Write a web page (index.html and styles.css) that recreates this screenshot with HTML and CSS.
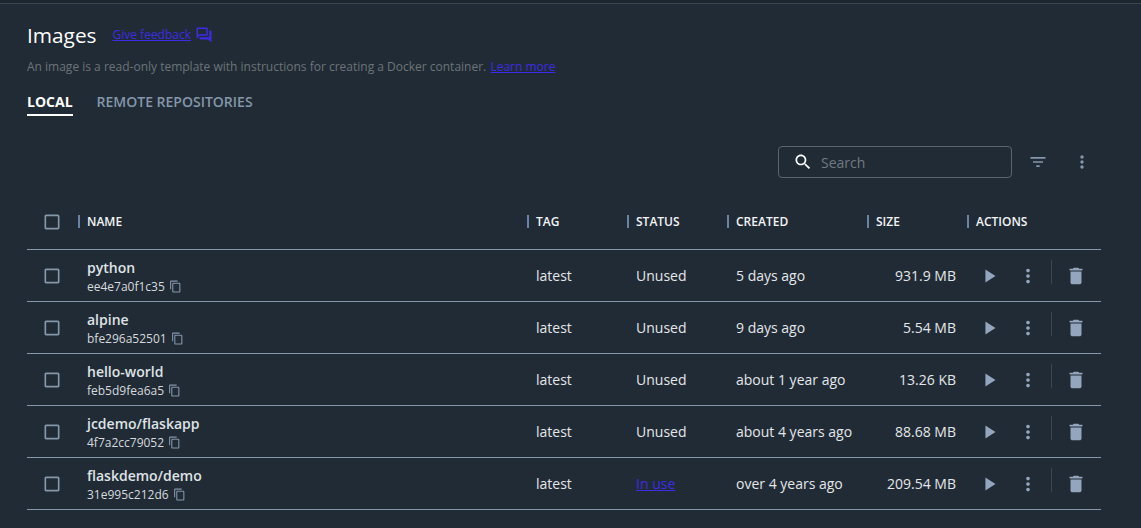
FILE: index.html
```html
<!DOCTYPE html>
<html lang="en">
<head>
  <meta charset="UTF-8">
  <title>Images</title>
  <link rel="stylesheet" href="styles.css">
</head>
<body>
  <svg class="defs" width="0" height="0">
    <symbol id="i-box" viewBox="0 0 24 24"><path d="M19 5v14H5V5h14m0-2H5c-1.100 0-2 .9-2 2v14c0 1.100.9 2 2 2h14c1.100 0 2-.9 2-2V5c0-1.100-.9-2-2-2z"/></symbol>
    <symbol id="i-copy" viewBox="0 0 24 24"><path d="M16 1H4c-1.100 0-2 .9-2 2v14h2V3h12V1zm3 4H8c-1.100 0-2 .9-2 2v14c0 1.100.9 2 2 2h11c1.100 0 2-.9 2-2V7c0-1.100-.9-2-2-2zm0 16H8V7h11v14z"/></symbol>
    <symbol id="i-play" viewBox="0 0 24 24"><path d="M7 5v14l11-7z"/></symbol>
    <symbol id="i-dots" viewBox="0 0 24 24"><path d="M12 8c1.100 0 2-.9 2-2s-.9-2-2-2-2 .9-2 2 .9 2 2 2zm0 2c-1.100 0-2 .9-2 2s.9 2 2 2 2-.9 2-2-.9-2-2-2zm0 6c-1.100 0-2 .9-2 2s.9 2 2 2 2-.9 2-2-.9-2-2-2z"/></symbol>
    <symbol id="i-trash" viewBox="0 0 24 24"><path d="M6 19c0 1.100.9 2 2 2h8c1.100 0 2-.9 2-2V7H6v12zM19 4h-3.500l-1-1h-5l-1 1H5v2h14V4z"/></symbol>
  </svg>

  <div class="topline"></div>

  <header class="head">
    <div class="title-row">
      <h1>Images</h1>
      <a class="feedback" href="#">Give feedback</a>
      <svg class="feedback-icon" viewBox="0 0 24 24"><path d="M15 4v7H5.170L4 12.170V4h11m1-2H3c-.55 0-1 .45-1 1v14l4-4h10c.55 0 1-.45 1-1V3c0-.55-.45-1-1-1zm5 4h-2v9H6v2c0 .55.45 1 1 1h11l4 4V7c0-.55-.45-1-1-1z"/></svg>
    </div>
    <p class="desc">An image is a read-only template with instructions for creating a Docker container. <a href="#">Learn more</a></p>
    <nav class="tabs">
      <span class="tab active">LOCAL</span>
      <span class="tab">REMOTE REPOSITORIES</span>
    </nav>
  </header>

  <div class="toolbar">
    <div class="search">
      <svg class="search-icon" viewBox="0 0 24 24"><path d="M15.500 14h-.79l-.28-.27C15.410 12.590 16 11.110 16 9.500 16 5.910 13.090 3 9.500 3S3 5.910 3 9.500 5.910 16 9.500 16c1.610 0 3.090-.59 4.230-1.570l.27.28v.79l5 4.990L20.490 19l-4.990-5zm-6 0C7.010 14 5 11.990 5 9.500S7.010 5 9.500 5 14 7.010 14 9.500 11.990 14 9.500 14z"/></svg>
      <span>Search</span>
    </div>
    <svg class="tool-icon filter" viewBox="0 0 24 24"><path d="M10 18h4v-2h-4v2zM3 6v2h18V6H3zm3 7h12v-2H6v2z"/></svg>
    <svg class="tool-icon dots"><use href="#i-dots"/></svg>
  </div>

  <div class="table">
    <div class="row header">
      <div class="cell check"><svg class="box"><use href="#i-box"/></svg></div>
      <div class="cell th">NAME</div>
      <div class="cell th">TAG</div>
      <div class="cell th">STATUS</div>
      <div class="cell th">CREATED</div>
      <div class="cell th">SIZE</div>
      <div class="cell th">ACTIONS</div>
    </div>

    <div class="row">
      <div class="cell check"><svg class="box"><use href="#i-box"/></svg></div>
      <div class="cell name"><strong>python</strong><small>ee4e7a0f1c35 <svg class="copy"><use href="#i-copy"/></svg></small></div>
      <div class="cell">latest</div>
      <div class="cell">Unused</div>
      <div class="cell">5 days ago</div>
      <div class="cell size">931.9 MB</div>
      <div class="cell actions"><svg class="play"><use href="#i-play"/></svg><svg class="more"><use href="#i-dots"/></svg><i class="divider"></i><svg class="trash"><use href="#i-trash"/></svg></div>
    </div>

    <div class="row">
      <div class="cell check"><svg class="box"><use href="#i-box"/></svg></div>
      <div class="cell name"><strong>alpine</strong><small>bfe296a52501 <svg class="copy"><use href="#i-copy"/></svg></small></div>
      <div class="cell">latest</div>
      <div class="cell">Unused</div>
      <div class="cell">9 days ago</div>
      <div class="cell size">5.54 MB</div>
      <div class="cell actions"><svg class="play"><use href="#i-play"/></svg><svg class="more"><use href="#i-dots"/></svg><i class="divider"></i><svg class="trash"><use href="#i-trash"/></svg></div>
    </div>

    <div class="row">
      <div class="cell check"><svg class="box"><use href="#i-box"/></svg></div>
      <div class="cell name"><strong>hello-world</strong><small>feb5d9fea6a5 <svg class="copy"><use href="#i-copy"/></svg></small></div>
      <div class="cell">latest</div>
      <div class="cell">Unused</div>
      <div class="cell">about 1 year ago</div>
      <div class="cell size">13.26 KB</div>
      <div class="cell actions"><svg class="play"><use href="#i-play"/></svg><svg class="more"><use href="#i-dots"/></svg><i class="divider"></i><svg class="trash"><use href="#i-trash"/></svg></div>
    </div>

    <div class="row">
      <div class="cell check"><svg class="box"><use href="#i-box"/></svg></div>
      <div class="cell name"><strong>jcdemo/flaskapp</strong><small>4f7a2cc79052 <svg class="copy"><use href="#i-copy"/></svg></small></div>
      <div class="cell">latest</div>
      <div class="cell">Unused</div>
      <div class="cell">about 4 years ago</div>
      <div class="cell size">88.68 MB</div>
      <div class="cell actions"><svg class="play"><use href="#i-play"/></svg><svg class="more"><use href="#i-dots"/></svg><i class="divider"></i><svg class="trash"><use href="#i-trash"/></svg></div>
    </div>

    <div class="row">
      <div class="cell check"><svg class="box"><use href="#i-box"/></svg></div>
      <div class="cell name"><strong>flaskdemo/demo</strong><small>31e995c212d6 <svg class="copy"><use href="#i-copy"/></svg></small></div>
      <div class="cell">latest</div>
      <div class="cell"><a href="#">In use</a></div>
      <div class="cell">over 4 years ago</div>
      <div class="cell size">209.54 MB</div>
      <div class="cell actions"><svg class="play"><use href="#i-play"/></svg><svg class="more"><use href="#i-dots"/></svg><i class="divider"></i><svg class="trash"><use href="#i-trash"/></svg></div>
    </div>
  </div>
</body>
</html>
```

FILE: styles.css
```css
* { box-sizing: border-box; margin: 0; padding: 0; }

html, body { height: 100%; }

body {
  font-family: "Open Sans", sans-serif;
  background: #212b35;
  color: #e3e7ea;
  font-size: 14px;
  overflow: hidden;
}

a { color: #3d2be5; }
svg { fill: currentColor; display: block; }
.defs { position: absolute; }

.topline {
  height: 4px;
  border-bottom: 1px solid #36454f;
  background: #1c262f;
}

.head { padding: 0 27px; }

.title-row {
  display: flex;
  align-items: center;
  height: 32px;
  margin-top: 15px;
}
h1 {
  font-size: 20.8px;
  font-weight: 400;
  color: #fff;
  line-height: 32px;
  margin-right: 16px;
}
.feedback { font-size: 12px; margin-bottom: 2px; }
.feedback-icon {
  width: 18px;
  height: 18px;
  margin-left: 4px;
  color: #3d2be5;
}

.desc {
  font-size: 12px;
  line-height: 18px;
  color: #6c7478;
  margin-top: 7px;
}
.desc a { margin-left: 1px; }

.tabs {
  display: flex;
  gap: 24px;
  margin-top: 16px;
}
.tab {
  font-size: 14px;
  font-weight: 600;
  line-height: 20px;
  padding-bottom: 2px;
  color: #8497ab;
}
.tab.active {
  font-weight: 700;
  color: #fff;
  border-bottom: 2px solid #fff;
}

.toolbar {
  display: flex;
  align-items: center;
  margin-top: 30px;
  padding-left: 778px;
  height: 32px;
}
.search {
  display: flex;
  align-items: center;
  width: 234px;
  height: 32px;
  border: 1px solid #59646c;
  border-radius: 4px;
  padding-left: 14px;
  color: #6f7a82;
}
.search-icon {
  width: 20px;
  height: 20px;
  color: #fff;
  margin-right: 8px;
}
.tool-icon { width: 20px; height: 20px; color: #8497ab; }
.filter { margin-left: 16px; }
.dots { margin-left: 24px; }

.table {
  margin: 16px 40px 0 27px;
}
.row {
  display: grid;
  grid-template-columns: 51px 449px 100px 100px 140px 100px 134px;
  height: 52px;
  border-bottom: 1px solid #8497ab;
}
.row.header { height: 56px; }

.cell {
  display: flex;
  align-items: center;
  padding-left: 9px;
  white-space: nowrap;
}
.cell.check { padding-left: 15px; }
.box { width: 20px; height: 20px; color: #8497ab; }

.cell.th {
  position: relative;
  font-size: 12px;
  font-weight: 600;
  color: #f2f4f5;
}
.cell.th::before {
  content: "";
  position: absolute;
  left: 0;
  top: 21px;
  width: 2px;
  height: 13px;
  background: #6a82a3;
}

.cell.name {
  flex-direction: column;
  align-items: flex-start;
  justify-content: center;
  padding-top: 3px;
}
.name strong {
  font-weight: 600;
  line-height: 18px;
  color: #dfe3e6;
}
.name small {
  display: flex;
  align-items: center;
  gap: 4px;
  margin-top: 1px;
  font-size: 12px;
  line-height: 18px;
  color: #d5dade;
}
.copy { width: 13px; height: 13px; color: #8497ab; }

.cell.size {
  justify-content: flex-end;
  padding-right: 11px;
}

.cell.actions { padding-left: 12px; }
.play { width: 22px; height: 22px; color: #94a6bd; }
.more { width: 22px; height: 22px; color: #94a6bd; margin-left: 16px; }
.divider {
  width: 1px;
  height: 24px;
  margin: 0 13px 8px 12px;
  background: #3b4852;
}
.trash { width: 22px; height: 22px; color: #94a6bd; }
```
